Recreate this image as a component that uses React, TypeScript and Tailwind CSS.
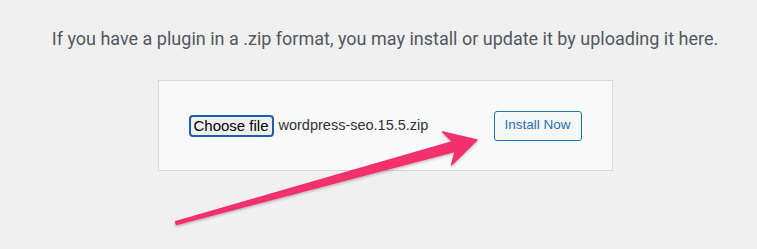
export default function App() {
  return (
    <div className="relative w-[757px] h-[249px] overflow-hidden bg-[#f0f0f1] font-['Liberation_Sans',Arial,sans-serif]">
      <div className="flex flex-col items-center pl-[13px] pt-[27px]">
        <p className="font-['Roboto',sans-serif] text-[18px] leading-[24px] text-[#50575e] whitespace-nowrap">
          If you have a plugin in a .zip format, you may install or update it by uploading it here.
        </p>
        <div className="mt-[29px] w-[455px] h-[91px] border border-[#d6d6d8] bg-[#f9f9f9] flex items-center justify-between px-[30px]">
          <div className="flex items-center gap-[5px]">
            <button className="h-[22px] w-[85px] rounded-[4px] border-2 border-[#1e5cae] bg-[#eef0f3] text-[15px] leading-none text-black">
              Choose file
            </button>
            <span className="text-[14.5px] text-[#2c3338]">wordpress-seo.15.5.zip</span>
          </div>
          <button className="h-[30px] w-[88px] rounded-[3px] border border-[#2271b1] bg-[#f6f7f7] text-[13.5px] text-[#2271b1]">
            Install Now
          </button>
        </div>
      </div>
      <svg
        className="absolute left-0 top-0 pointer-events-none"
        width="757"
        height="249"
        viewBox="0 0 757 249"
      >
        <defs>
          <filter id="sh" x="-10%" y="-10%" width="120%" height="130%">
            <feDropShadow dx="0" dy="1.5" stdDeviation="1.2" floodColor="#000" floodOpacity="0.25" />
          </filter>
        </defs>
        <polygon
          points="175.6,221.6 452.6,141.6 442.7,131.9 477,140 451.7,164.7 455.2,151.2 176.4,224.4"
          fill="#f3306d"
          stroke="#f3306d"
          strokeWidth="1.5"
          strokeLinejoin="round"
          filter="url(#sh)"
        />
      </svg>
    </div>
  );
}
